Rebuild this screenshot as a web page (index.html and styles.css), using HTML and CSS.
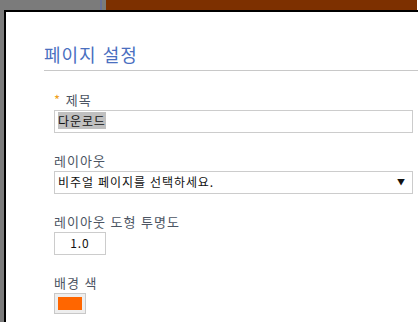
FILE: index.html
```html
<!DOCTYPE html>
<html lang="ko">
<head>
    <meta charset="UTF-8">
    <title>페이지 설정</title>
    <link rel="stylesheet" href="styles.css">
</head>
<body>
    <div class="topbar">
        <div class="topbar-gray"></div>
        <div class="topbar-line"></div>
        <div class="topbar-gray2"></div>
        <div class="topbar-brown"></div>
    </div>
    <div class="desk">
        <div class="dialog">
            <h1>페이지 설정</h1>
            <form class="form">
                <div class="field">
                    <label><span class="req">*</span> 제목</label>
                    <div class="input wide"><span class="sel">다운로드</span></div>
                </div>
                <div class="field">
                    <label>레이아웃</label>
                    <div class="input wide select">
                        <span>비주얼 페이지를 선택하세요.</span>
                        <span class="arrow">▼</span>
                    </div>
                </div>
                <div class="field">
                    <label>레이아웃 도형 투명도</label>
                    <div class="input small">1.0</div>
                </div>
                <div class="field">
                    <label>배경 색</label>
                    <div class="swatch"><div class="swatch-fill"></div></div>
                </div>
            </form>
        </div>
    </div>
</body>
</html>
```

FILE: styles.css
```css
body {
    margin: 0;
    width: 418px;
    height: 322px;
    overflow: hidden;
    font-family: "Noto Sans CJK KR", "Noto Sans", sans-serif;
    background: #fff;
}
.topbar {
    display: flex;
    height: 10px;
}
.topbar-gray {
    width: 100px;
    background: #7b7b7b;
}
.topbar-line {
    width: 2px;
    background: #6a7296;
}
.topbar-gray2 {
    width: 4px;
    background: #7b7b7b;
}
.topbar-brown {
    width: 311px;
    background: #7d3000;
}
.desk {
    background: linear-gradient(to right, #7b7b7b 0, #7b7b7b 4px, #fff 4px);
    height: 312px;
}
.dialog {
    margin-left: 4px;
    width: 413px;
    height: 310px;
    border-left: 2px solid #000;
    border-top: 2px solid #000;
    background: #fff;
}
h1 {
    margin: 0 0 0 38px;
    padding: 30px 0 4px;
    font-size: 18px;
    font-weight: normal;
    letter-spacing: 1px;
    color: #4a6fbf;
    line-height: 24px;
    border-bottom: 1px solid #c8c8c8;
}
.form {
    padding: 19px 0 0 48px;
}
.field {
    margin-bottom: 18px;
}
label {
    display: block;
    font-size: 13px;
    letter-spacing: 1px;
    color: #4c5563;
    line-height: 19px;
    margin-bottom: 1px;
}
.req {
    color: #f0a020;
}
.input {
    box-sizing: border-box;
    height: 23px;
    border: 1px solid #cccccc;
    font-size: 12px;
    letter-spacing: 0.9px;
    color: #111;
    line-height: 20px;
    padding: 0 3px;
}
.wide {
    width: 359px;
}
.sel {
    background: #c0c0c0;
}
.select {
    display: flex;
    justify-content: space-between;
}
.arrow {
    font-size: 8px;
    color: #111;
    padding-right: 3px;
}
.small {
    width: 52px;
    text-align: center;
}
.swatch {
    box-sizing: border-box;
    width: 32px;
    height: 21px;
    border: 1px solid #c8c8c8;
    background: #eee;
    padding: 3px;
}
.swatch-fill {
    height: 13px;
    background: #ff6600;
}
```
